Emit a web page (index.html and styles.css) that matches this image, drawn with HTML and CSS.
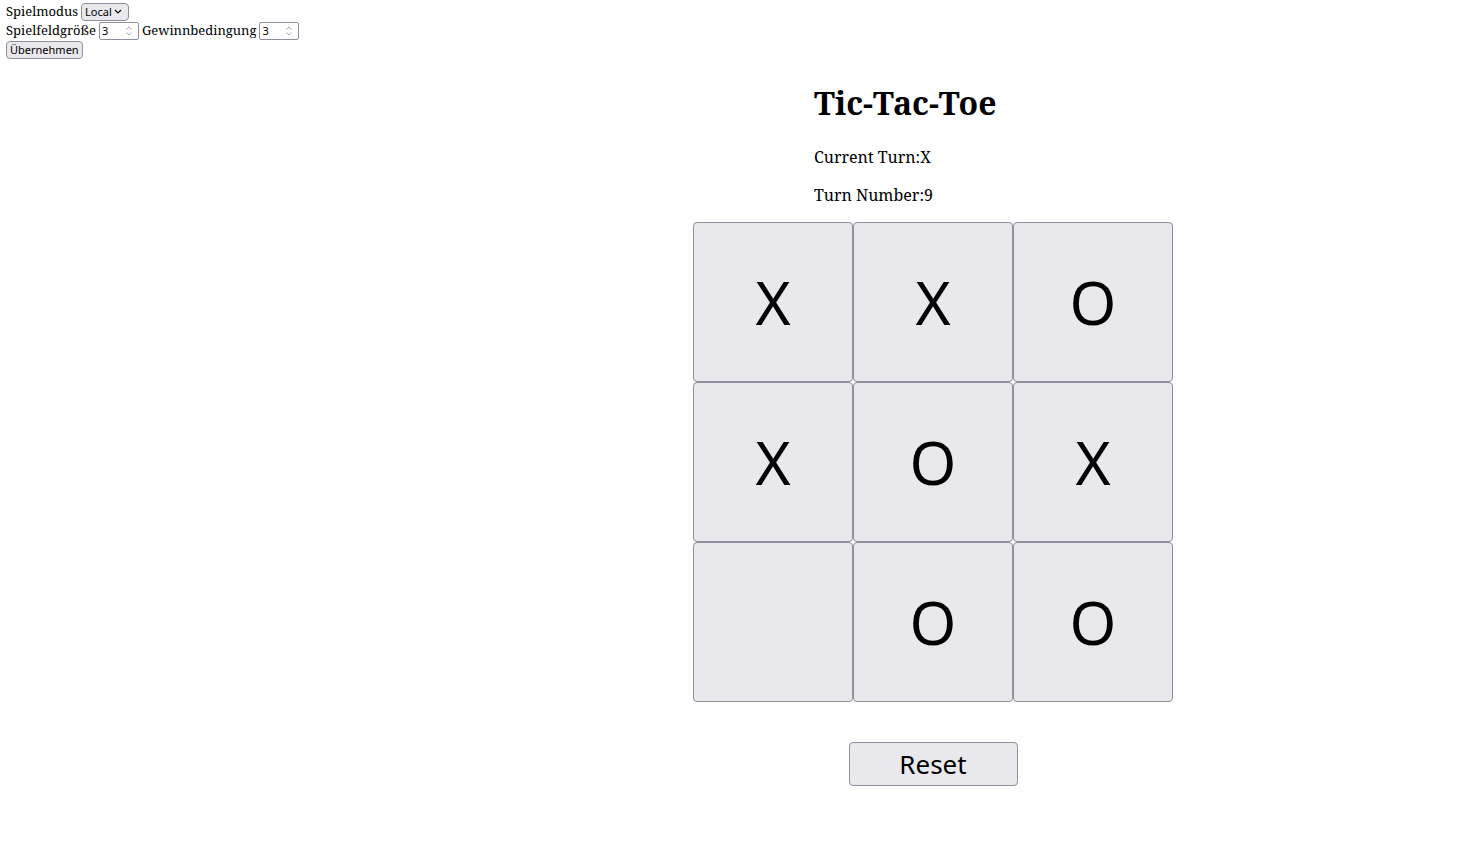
FILE: index.html
```html
<!DOCTYPE html>
<html lang="de">
<head>
<meta charset="utf-8">
<title>Tic-Tac-Toe</title>
<link rel="stylesheet" href="styles.css">
</head>
<body>
<div class="settings">
  <div class="row">
    <label>Spielmodus</label>
    <span class="select">Local
      <svg class="chev" width="8" height="5" viewBox="0 0 8 5"><path d="M1 1 L4 4 L7 1" fill="none" stroke="#000" stroke-width="1.1"/></svg>
    </span>
  </div>
  <div class="row">
    <label>Spielfeldgröße</label>
    <span class="numbox"><span class="numval">3</span>
      <svg class="spin" width="8" height="12" viewBox="0 0 8 12"><path d="M1.5 4.5 L4 2 L6.5 4.5 M1.5 7.5 L4 10 L6.5 7.5" fill="none" stroke="#9a9aa4" stroke-width="0.9"/></svg>
    </span>
    <label>Gewinnbedingung</label>
    <span class="numbox"><span class="numval">3</span>
      <svg class="spin" width="8" height="12" viewBox="0 0 8 12"><path d="M1.5 4.5 L4 2 L6.5 4.5 M1.5 7.5 L4 10 L6.5 7.5" fill="none" stroke="#9a9aa4" stroke-width="0.9"/></svg>
    </span>
  </div>
  <div class="row">
    <button class="small-btn">Übernehmen</button>
  </div>
</div>

<div class="game">
  <div class="info">
    <h1>Tic-Tac-Toe</h1>
    <p>Current Turn:X</p>
    <p>Turn Number:9</p>
  </div>
  <div class="board">
    <button class="cell">X</button>
    <button class="cell">X</button>
    <button class="cell">O</button>
    <button class="cell">X</button>
    <button class="cell">O</button>
    <button class="cell">X</button>
    <button class="cell"></button>
    <button class="cell">O</button>
    <button class="cell">O</button>
  </div>
  <div class="actions">
    <button class="reset">Reset</button>
  </div>
</div>
</body>
</html>
```

FILE: styles.css
```css
body {
  margin: 2px 6px;
  font-family: "Noto Serif", "DejaVu Serif", serif;
  font-size: 16px;
  color: #000;
  background: #fff;
}

.settings .row {
  display: flex;
  align-items: center;
  gap: 3px;
  height: 19px;
  line-height: 19px;
}

.settings label {
  font-size: 13px;
}

.select {
  display: inline-flex;
  align-items: center;
  justify-content: space-between;
  box-sizing: border-box;
  width: 48px;
  height: 18px;
  padding: 0 6px 0 3px;
  border: 1px solid #8f8f9d;
  border-radius: 4px;
  background: #e9e9ed;
  font-family: "Noto Sans", "Open Sans", sans-serif;
  font-size: 11px;
  line-height: 16px;
}

.numbox {
  display: inline-flex;
  align-items: center;
  justify-content: space-between;
  box-sizing: border-box;
  width: 40px;
  height: 18px;
  padding: 0 5px 0 2px;
  border: 1px solid #8f8f9d;
  border-radius: 2px;
  background: #fff;
  font-family: "Noto Sans", "Open Sans", sans-serif;
  font-size: 11px;
  line-height: 16px;
}

.small-btn {
  height: 18px;
  padding: 0 3px;
  border: 1px solid #8f8f9d;
  border-radius: 4px;
  background: #e9e9ed;
  font-family: "Noto Sans", "Open Sans", sans-serif;
  font-size: 11px;
  line-height: 16px;
  color: #000;
}

.game {
  width: 480px;
  margin-left: 687px;
  padding-top: 1px;
}

.info {
  width: 238px;
  margin: 0 auto;
}

h1 {
  font-size: 32px;
  font-weight: bold;
  margin: 21px 0 22px;
  line-height: 43px;
}

p {
  margin: 16px 0;
  line-height: 22px;
}

.board {
  display: grid;
  grid-template-columns: repeat(3, 160px);
  grid-template-rows: repeat(3, 160px);
}

.cell {
  width: 160px;
  height: 160px;
  margin: 0;
  padding: 0;
  border: 1px solid #8f8f9d;
  border-radius: 4px;
  background: #e9e9ed;
  font-family: "Noto Sans", "Open Sans", sans-serif;
  font-size: 60px;
  color: #000;
}

.actions {
  display: flex;
  justify-content: center;
  margin-top: 40px;
}

.reset {
  width: 169px;
  height: 44px;
  padding: 0;
  border: 1px solid #8f8f9d;
  border-radius: 4px;
  background: #e9e9ed;
  font-family: "Noto Sans", "Open Sans", sans-serif;
  font-size: 26px;
  color: #000;
}
```
